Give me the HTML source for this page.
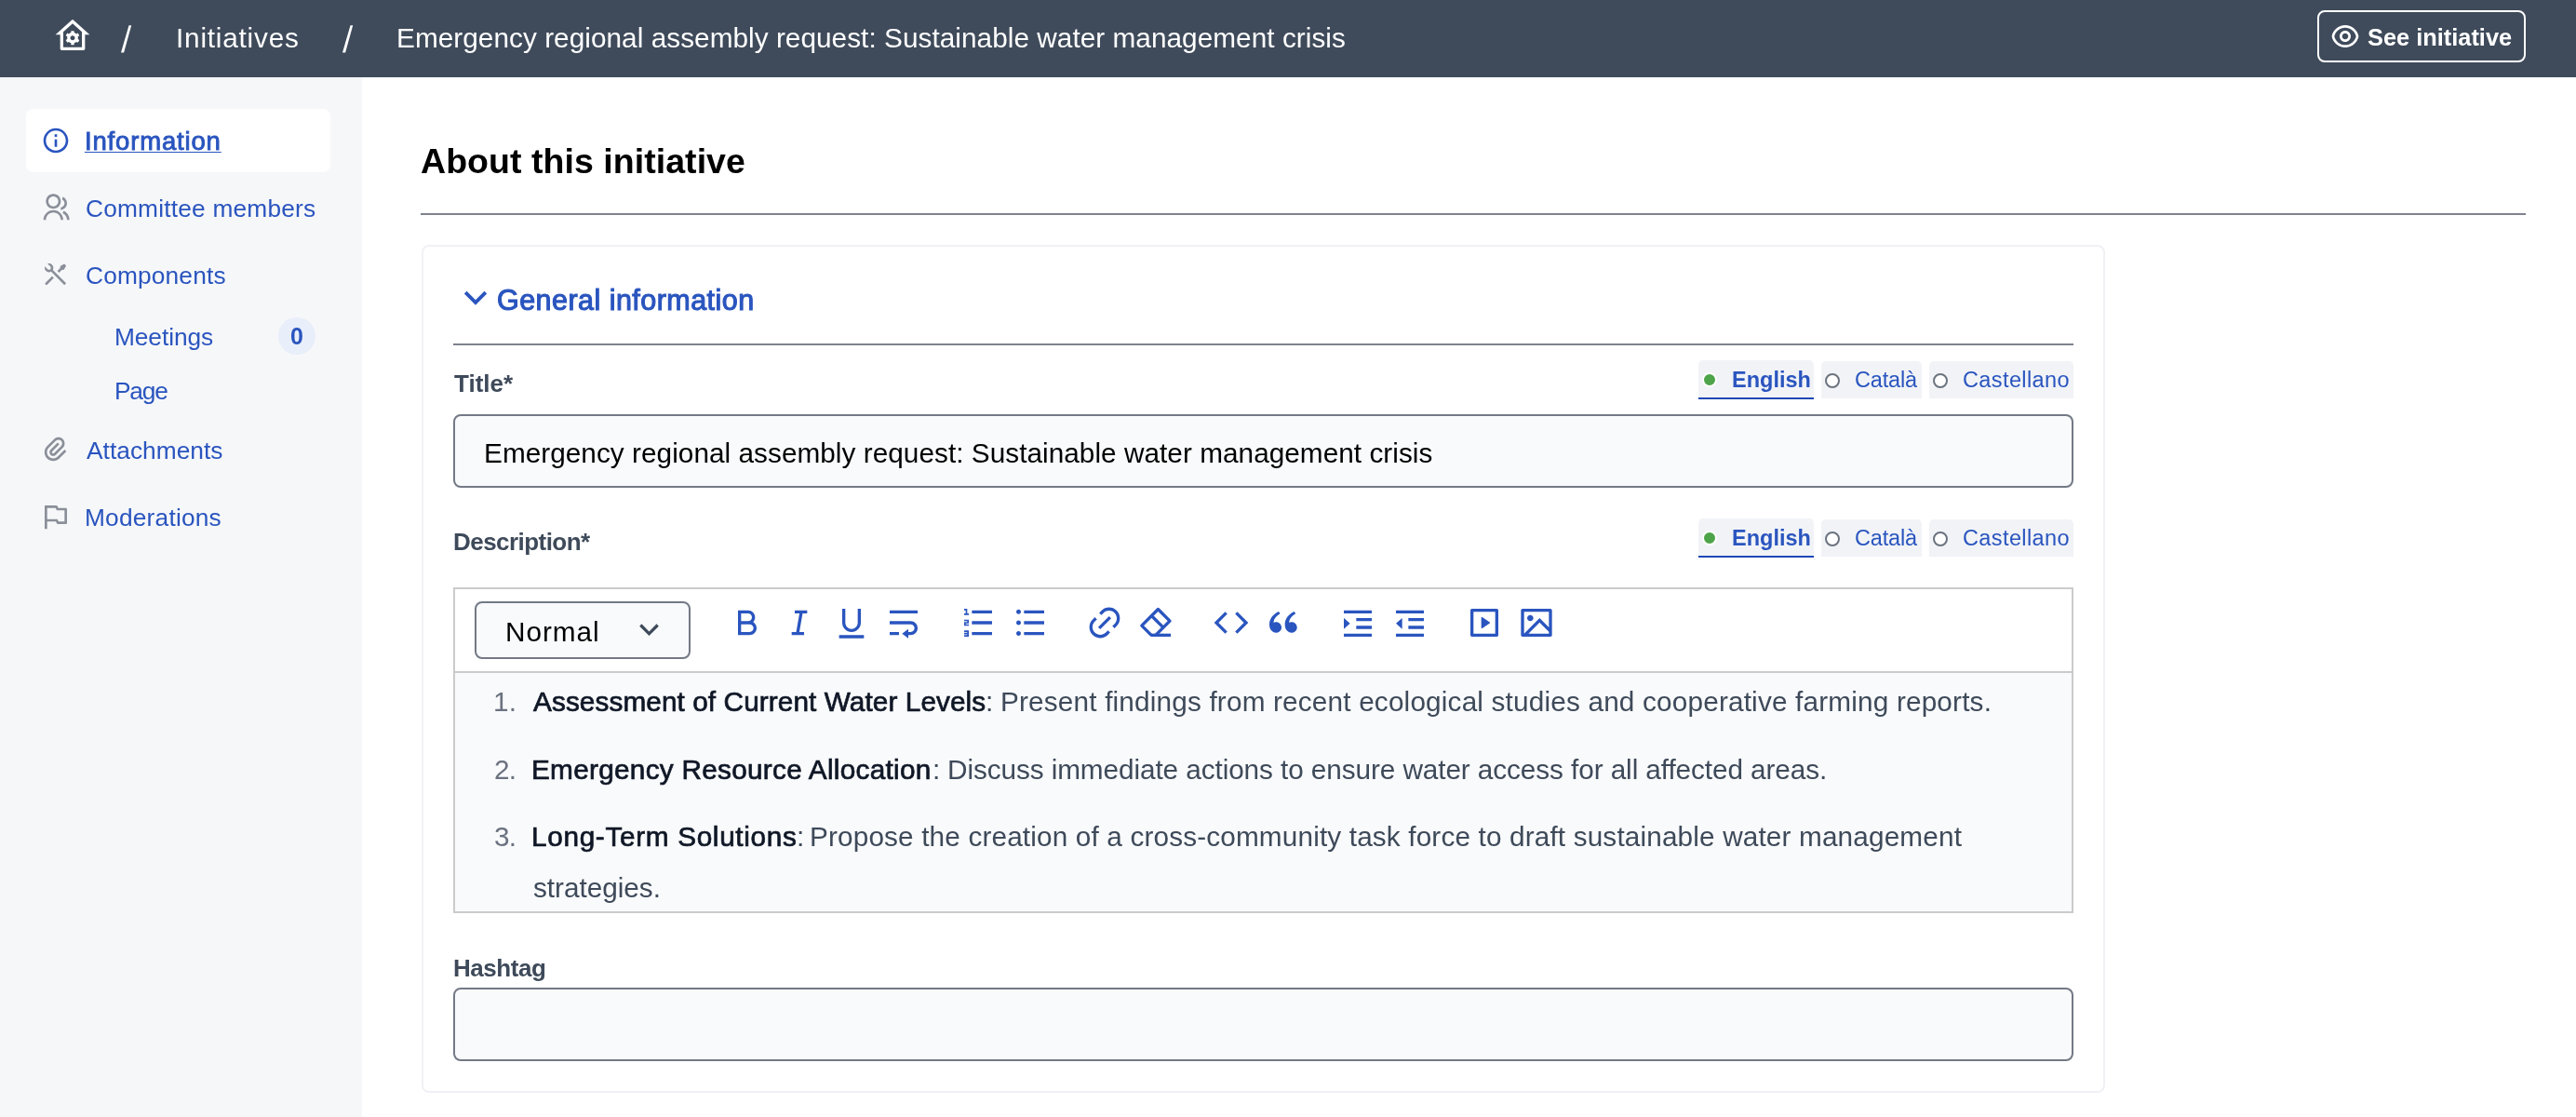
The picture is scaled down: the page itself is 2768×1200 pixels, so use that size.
<!DOCTYPE html>
<html><head><meta charset="utf-8"><style>
html,body{margin:0;padding:0;width:2768px;height:1200px;overflow:hidden;background:#fff;font-family:"Liberation Sans",sans-serif;}
.a{position:absolute;box-sizing:border-box;}
.t{position:absolute;white-space:nowrap;will-change:transform;}
svg{position:absolute;overflow:visible;}
</style></head><body>
<!-- header -->
<div class="a" style="left:0;top:0;width:2768px;height:83px;background:#3f4b5b"></div>
<svg style="left:58px;top:19px" width="40" height="40" viewBox="0 0 24 24"><path fill="#fff" d="M19 21H5C4.44772 21 4 20.5523 4 20V11L1 11L11.3273 1.6115C11.7087 1.26475 12.2913 1.26475 12.6727 1.6115L23 11L20 11V20C20 20.5523 19.5523 21 19 21ZM6 19H18V9.15745L12 3.7029L6 9.15745V19ZM8.59117 13.8089C8.52937 13.5477 8.49666 13.2753 8.49666 12.9954C8.49666 12.7155 8.52929 12.4432 8.59107 12.1821L7.60003 11.6093L8.59918 9.87906L9.59064 10.4526C9.98412 10.0792 10.4669 9.79756 11.0035 9.64331V8.49777H13.0016V9.64331C13.5383 9.79756 14.0211 10.0793 14.4146 10.4527L15.4062 9.87906L16.4054 11.6093L15.4142 12.1821C15.4759 12.4432 15.5086 12.7155 15.5086 12.9954C15.5086 13.2753 15.4759 13.5477 15.4141 13.8089L16.4054 14.3817L15.4062 16.1119L14.4144 15.5381C14.0209 15.9114 13.5382 16.193 13.0016 16.3473V17.4928H11.0035V16.3473C10.4669 16.1931 9.98418 15.9114 9.59072 15.5381L8.59918 16.1119L7.60003 14.3817L8.59117 13.8089ZM12.0026 14.4943C12.8303 14.4943 13.5013 13.8233 13.5013 12.9954C13.5013 12.1676 12.8303 11.4966 12.0026 11.4966C11.1748 11.4966 10.5038 12.1676 10.5038 12.9954C10.5038 13.8233 11.1748 14.4943 12.0026 14.4943Z"/></svg>
<svg style="left:128px;top:26px" width="16" height="32"><polygon points="10.5,1.3 13.2,1.3 5.1,30.4 2,30.4" fill="#fff"/></svg>
<svg style="left:366px;top:26px" width="16" height="32"><polygon points="10.5,1.3 13.2,1.3 5.1,30.4 2,30.4" fill="#fff"/></svg>
<div class="a" style="left:2490px;top:11px;width:224px;height:56px;border:2px solid #fff;border-radius:8px"></div>
<svg style="left:2504px;top:23px" width="32" height="32" viewBox="0 0 24 24"><path fill="#fff" d="M12.0003 3C17.3924 3 21.8784 6.87976 22.8189 12C21.8784 17.1202 17.3924 21 12.0003 21C6.60812 21 2.12215 17.1202 1.18164 12C2.12215 6.87976 6.60812 3 12.0003 3ZM12.0003 19C16.2359 19 19.8603 16.052 20.7777 12C19.8603 7.94803 16.2359 5 12.0003 5C7.7646 5 4.14022 7.94803 3.22278 12C4.14022 16.052 7.7646 19 12.0003 19ZM12.0003 16.5C9.51498 16.5 7.50026 14.4853 7.50026 12C7.50026 9.51472 9.51498 7.5 12.0003 7.5C14.4855 7.5 16.5003 9.51472 16.5003 12C16.5003 14.4853 14.4855 16.5 12.0003 16.5ZM12.0003 14.5C13.381 14.5 14.5003 13.3807 14.5003 12C14.5003 10.6193 13.381 9.5 12.0003 9.5C10.6196 9.5 9.50026 10.6193 9.50026 12C9.50026 13.3807 10.6196 14.5 12.0003 14.5Z"/></svg>

<!-- sidebar -->
<div class="a" style="left:0;top:83px;width:389px;height:1117px;background:#f6f7f9"></div>
<div class="a" style="left:28px;top:117px;width:327px;height:68px;background:#fff;border-radius:8px"></div>
<svg style="left:44px;top:135px" width="32" height="32" viewBox="0 0 24 24"><path fill="#2a55bf" d="M12 22C6.47715 22 2 17.5228 2 12C2 6.47715 6.47715 2 12 2C17.5228 2 22 6.47715 22 12C22 17.5228 17.5228 22 12 22ZM12 20C16.4183 20 20 16.4183 20 12C20 7.58172 16.4183 4 12 4C7.58172 4 4 7.58172 4 12C4 16.4183 7.58172 20 12 20ZM11 7H13V9H11V7ZM11 11H13V17H11V11Z"/></svg>
<svg style="left:44px;top:207px" width="32" height="32" viewBox="0 0 24 24"><path fill="#8a8f99" d="M2 22C2 17.5817 5.58172 14 10 14C14.4183 14 18 17.5817 18 22H16C16 18.6863 13.3137 16 10 16C6.68629 16 4 18.6863 4 22H2ZM10 13C6.685 13 4 10.315 4 7C4 3.685 6.685 1 10 1C13.315 1 16 3.685 16 7C16 10.315 13.315 13 10 13ZM10 11C12.21 11 14 9.21 14 7C14 4.79 12.21 3 10 3C7.79 3 6 4.79 6 7C6 9.21 7.79 11 10 11ZM18.2837 14.7028C21.0644 15.9561 23 18.752 23 22H21C21 19.564 19.5483 17.4671 17.4628 16.5271L18.2837 14.7028ZM17.5962 3.41321C19.5944 4.23703 21 6.20361 21 8.5C21 11.3702 18.8042 13.7252 16 13.9776V11.9646C17.6967 11.7222 19 10.264 19 8.5C19 7.11935 18.2016 5.92603 17.041 5.35635L17.5962 3.41321Z"/></svg>
<svg style="left:44px;top:279px" width="32" height="32" viewBox="0 0 24 24"><path fill="#8a8f99" d="M5.32943 3.27158C6.56252 2.8332 7.9923 3.10749 8.97927 4.09446C10.1002 5.21537 10.3019 6.90741 9.5843 8.23385L20.293 18.9437L18.8788 20.3579L8.16982 9.64875C6.84325 10.3669 5.15069 10.1654 4.02952 9.04421C3.04227 8.05696 2.7681 6.62665 3.20701 5.39332L5.44373 7.63C6.02952 8.21578 6.97927 8.21578 7.56505 7.63C8.15084 7.04421 8.15084 6.09446 7.56505 5.50868L5.32943 3.27158ZM15.6968 5.15512L18.8788 3.38736L20.293 4.80157L18.5252 7.98355L16.7574 8.3371L14.6361 10.4584L13.2219 9.04421L15.3432 6.92289L15.6968 5.15512ZM8.97927 13.2868L10.3935 14.7011L5.09018 20.0044C4.69966 20.3949 4.06649 20.3949 3.67597 20.0044C3.31334 19.6417 3.28744 19.0699 3.59826 18.6774L3.67597 18.5902L8.97927 13.2868Z"/></svg>
<div class="a" style="left:299px;top:341px;width:40px;height:40px;border-radius:20px;background:#e8eefa"></div>
<span class="t" style="left:312px;top:345px;font-size:25px;line-height:32px;font-weight:700;color:#2a55bf">0</span>
<svg style="left:44px;top:467px" width="32" height="32" viewBox="0 0 24 24"><path fill="#8a8f99" d="M14.8287 7.7574L9.1718 13.4143C8.78127 13.8048 8.78127 14.4379 9.1718 14.8285C9.56232 15.219 10.1955 15.219 10.586 14.8285L16.2429 9.17161C17.4144 8.00004 17.4144 6.10055 16.2429 4.92897C15.0713 3.7574 13.1718 3.7574 12.0002 4.92897L6.34337 10.5858C4.39075 12.5384 4.39075 15.7043 6.34337 17.6569C8.29599 19.6095 11.4618 19.6095 13.4144 17.6569L19.0713 12L20.4855 13.4143L14.8287 19.0711C12.095 21.8048 7.66283 21.8048 4.92916 19.0711C2.19549 16.3374 2.19549 11.9053 4.92916 9.17161L10.586 3.51476C12.5386 1.56214 15.7045 1.56214 17.6571 3.51476C19.6097 5.46738 19.6097 8.63321 17.6571 10.5858L12.0002 16.2427C10.8287 17.4143 8.92916 17.4143 7.75759 16.2427C6.58601 15.0711 6.58601 13.1716 7.75759 12L13.4144 6.34319L14.8287 7.7574Z"/></svg>
<svg style="left:44px;top:539px" width="32" height="32" viewBox="0 0 24 24"><path fill="#8a8f99" d="M5 16V22H3V3H12.382C12.7607 3 13.107 3.214 13.2764 3.55279L14 5H20C20.5523 5 21 5.44772 21 6V17C21 17.5523 20.5523 18 20 18H13.618C13.2393 18 12.893 17.786 12.7236 17.4472L12 16H5ZM5 5V14H13.236L14.236 16H19V7H12.764L11.764 5H5Z"/></svg>

<!-- main -->
<div class="a" style="left:452px;top:229px;width:2262px;height:2px;background:#7d828d"></div>
<div class="a" style="left:453px;top:263px;width:1809px;height:911px;border:2px solid #f0f1f5;border-radius:8px"></div>
<svg style="left:487.5px;top:297px" width="46" height="46" viewBox="0 0 24 24"><path fill="#2a55bf" d="M11.9999 13.1714L16.9497 8.22168L18.3639 9.63589L11.9999 15.9999L5.63599 9.63589L7.0502 8.22168L11.9999 13.1714Z"/></svg>
<div class="a" style="left:487px;top:369px;width:1741px;height:2px;background:#7d828d"></div>

<!-- tabs 1 -->
<div class="a" style="left:1825px;top:387px;width:124px;height:42px;background:#f1f3f7;border-radius:5px 5px 0 0;border-bottom:2px solid #1f48b5"></div>
<div class="a" style="left:1957px;top:388px;width:108px;height:40px;background:#f1f3f7;border-radius:5px 5px 0 0"></div>
<div class="a" style="left:2073px;top:388px;width:155px;height:40px;background:#f1f3f7;border-radius:5px 5px 0 0"></div>
<div class="a" style="left:1829px;top:400px;width:16px;height:16px;border-radius:8px;background:#4ea449;border:2px solid #fff"></div>
<div class="a" style="left:1961px;top:401px;width:16px;height:16px;border-radius:8px;background:#fff;border:2px solid #6b737e"></div>
<div class="a" style="left:2077px;top:401px;width:16px;height:16px;border-radius:8px;background:#fff;border:2px solid #6b737e"></div>
<!-- tabs 2 -->
<div class="a" style="left:1825px;top:557px;width:124px;height:42px;background:#f1f3f7;border-radius:5px 5px 0 0;border-bottom:2px solid #1f48b5"></div>
<div class="a" style="left:1957px;top:558px;width:108px;height:40px;background:#f1f3f7;border-radius:5px 5px 0 0"></div>
<div class="a" style="left:2073px;top:558px;width:155px;height:40px;background:#f1f3f7;border-radius:5px 5px 0 0"></div>
<div class="a" style="left:1829px;top:570px;width:16px;height:16px;border-radius:8px;background:#4ea449;border:2px solid #fff"></div>
<div class="a" style="left:1961px;top:571px;width:16px;height:16px;border-radius:8px;background:#fff;border:2px solid #6b737e"></div>
<div class="a" style="left:2077px;top:571px;width:16px;height:16px;border-radius:8px;background:#fff;border:2px solid #6b737e"></div>

<!-- title input -->
<div class="a" style="left:487px;top:445px;width:1741px;height:79px;background:#f9fafb;border:2px solid #737985;border-radius:8px"></div>

<!-- editor -->
<div class="a" style="left:487px;top:631px;width:1741px;height:350px;border:2px solid #cbcbcb;background:#fff"></div>
<div class="a" style="left:489px;top:721px;width:1737px;height:258px;background:#f9fafb;border-top:2px solid #cbcbcb"></div>
<div class="a" style="left:510px;top:646px;width:232px;height:62px;background:#f9fafb;border:2px solid #737985;border-radius:8px"></div>
<svg style="left:677.5px;top:657.3px" width="39" height="39" viewBox="0 0 24 24"><path fill="#3e4a5a" d="M11.9999 13.1714L16.9497 8.22168L18.3639 9.63589L11.9999 15.9999L5.63599 9.63589L7.0502 8.22168L11.9999 13.1714Z"/></svg>

<!-- hashtag input -->
<div class="a" style="left:487px;top:1061px;width:1741px;height:79px;background:#f9fafb;border:2px solid #737985;border-radius:8px"></div>

<!-- toolbar icons -->
<svg style="left:782.5px;top:649px" width="40" height="40" viewBox="0 0 24 24"><path fill="#2a55bf" d="M8 11H12.5C13.8807 11 15 9.88071 15 8.5C15 7.11929 13.8807 6 12.5 6H8V11ZM18 15.5C18 17.9853 15.9853 20 13.5 20H6V4H12.5C14.9853 4 17 6.01472 17 8.5C17 9.70431 16.5269 10.7981 15.7564 11.6058C17.0979 12.3847 18 13.837 18 15.5ZM8 13V18H13.5C14.8807 18 16 16.8807 16 15.5C16 14.1193 14.8807 13 13.5 13H8Z"/></svg>
<svg style="left:838.7px;top:649px" width="40" height="40" viewBox="0 0 24 24"><path fill="#2a55bf" d="M15 20H7V18H9.92661L12.0425 6H9V4H17V6H14.0734L11.9575 18H15V20Z"/></svg>
<svg style="left:895.3px;top:649px" width="40" height="40" viewBox="0 0 24 24"><path fill="#2a55bf" d="M8 3V12C8 14.2091 9.79086 16 12 16C14.2091 16 16 14.2091 16 12V3H18V12C18 15.3137 15.3137 18 12 18C8.68629 18 6 15.3137 6 12V3H8ZM4 20H20V22H4V20Z"/></svg>
<svg style="left:950.8px;top:649px" width="40" height="40" viewBox="0 0 24 24"><path fill="#2a55bf" d="M15 18H16.5C17.8807 18 19 16.8807 19 15.5C19 14.1193 17.8807 13 16.5 13H3V11H16.5C18.9853 11 21 13.0147 21 15.5C21 17.9853 18.9853 20 16.5 20H15V22L11 19L15 16V18ZM3 4H21V6H3V4ZM9 18V20H3V18H9Z"/></svg>
<svg style="left:1031.4px;top:649px" width="40" height="40" viewBox="0 0 24 24"><path fill="#2a55bf" d="M8 4H21V6H8V4ZM5 3V6H6V7H3V6H4V4H3V3H5ZM3 14V11.5H5V11H3V10H6V12.5H4V13H6V14H3ZM5 19.5H3V18.5H5V18H3V17H6V21H3V20H5V19.5ZM8 11H21V13H8V11ZM8 18H21V20H8V18Z"/></svg>
<svg style="left:1087px;top:649px" width="40" height="40" viewBox="0 0 24 24"><path fill="#2a55bf" d="M8 4H21V6H8V4ZM4.5 6.5C3.67157 6.5 3 5.82843 3 5C3 4.17157 3.67157 3.5 4.5 3.5C5.32843 3.5 6 4.17157 6 5C6 5.82843 5.32843 6.5 4.5 6.5ZM4.5 13.5C3.67157 13.5 3 12.8284 3 12C3 11.1716 3.67157 10.5 4.5 10.5C5.32843 10.5 6 11.1716 6 12C6 12.8284 5.32843 13.5 4.5 13.5ZM4.5 20.4C3.67157 20.4 3 19.7284 3 18.9C3 18.0716 3.67157 17.4 4.5 17.4C5.32843 17.4 6 18.0716 6 18.9C6 19.7284 5.32843 20.4 4.5 20.4ZM8 11H21V13H8V11ZM8 18H21V20H8V18Z"/></svg>
<svg style="left:1167.2px;top:649px" width="40" height="40" viewBox="0 0 24 24"><path fill="#2a55bf" d="M18.3638 15.5355L16.9496 14.1213L18.3638 12.7071C20.3164 10.7545 20.3164 7.58866 18.3638 5.63604C16.4112 3.68341 13.2453 3.68341 11.2927 5.63604L9.87849 7.05025L8.46428 5.63604L9.87849 4.22182C12.6122 1.48815 17.0443 1.48815 19.778 4.22182C22.5117 6.95549 22.5117 11.3876 19.778 14.1213L18.3638 15.5355ZM15.5353 18.364L14.1211 19.7782C11.3875 22.5118 6.95531 22.5118 4.22164 19.7782C1.48797 17.0445 1.48797 12.6123 4.22164 9.87868L5.63585 8.46446L7.05007 9.87868L5.63585 11.2929C3.68323 13.2455 3.68323 16.4113 5.63585 18.364C7.58847 20.3166 10.7543 20.3166 12.7069 18.364L14.1211 16.9497L15.5353 18.364ZM14.8282 7.75736L16.2425 9.17157L9.17139 16.2426L7.75717 14.8284L14.8282 7.75736Z"/></svg>
<svg style="left:1303.3px;top:649px" width="40" height="40" viewBox="0 0 24 24"><path fill="#2a55bf" d="M23 12L15.9289 19.0711L14.5147 17.6569L20.1716 12L14.5147 6.34317L15.9289 4.92896L23 12ZM3.82843 12L9.48528 17.6569L8.07107 19.0711L1 12L8.07107 4.92896L9.48528 6.34317L3.82843 12Z"/></svg>
<svg style="left:1359px;top:649px" width="40" height="40" viewBox="0 0 24 24"><path fill="#2a55bf" d="M4.58341 17.3211C3.55316 16.2274 3 15 3 13.0103C3 9.51086 5.45651 6.37366 9.03059 4.82318L9.92328 6.20079C6.58804 8.00539 5.93618 10.346 5.67564 11.8209C6.21263 11.5426 6.91558 11.4466 7.60471 11.5105C9.40908 11.6779 10.8312 13.1591 10.8312 15C10.8312 16.933 9.26416 18.5 7.33116 18.5C6.2581 18.5 5.23196 18.0095 4.58341 17.3211ZM14.5834 17.3211C13.5532 16.2274 13 15 13 13.0103C13 9.51086 15.4565 6.37366 19.0306 4.82318L19.9233 6.20079C16.588 8.00539 15.9362 10.346 15.6756 11.8209C16.2126 11.5426 16.9156 11.4466 17.6047 11.5105C19.4091 11.6779 20.8312 13.1591 20.8312 15C20.8312 16.933 19.2642 18.5 17.3312 18.5C16.2581 18.5 15.232 18.0095 14.5834 17.3211Z"/></svg>
<svg style="left:1439px;top:649px" width="40" height="40" viewBox="0 0 24 24"><path fill="#2a55bf" d="M3 4H21V6H3V4ZM3 19H21V21H3V19ZM11 14H21V16H11V14ZM11 9H21V11H11V9ZM3 9L7 12.5L3 16V9Z"/></svg>
<svg style="left:1495px;top:649px" width="40" height="40" viewBox="0 0 24 24"><path fill="#2a55bf" d="M3 4H21V6H3V4ZM3 19H21V21H3V19ZM11 14H21V16H11V14ZM11 9H21V11H11V9ZM7 9V16L3 12.5L7 9Z"/></svg>
<svg style="left:1575.3px;top:649px" width="40" height="40" viewBox="0 0 24 24"><path fill="#2a55bf" d="M3 3.9934C3 3.44476 3.44495 3 3.9934 3H20.0066C20.5552 3 21 3.44495 21 3.9934V20.0066C21 20.5552 20.5551 21 20.0066 21H3.9934C3.44476 21 3 20.5551 3 20.0066V3.9934ZM5 5V19H19V5H5ZM10.6219 8.41459L15.5008 11.6672C15.6846 11.7897 15.7343 12.0381 15.6117 12.2219C15.5824 12.2658 15.5447 12.3035 15.5008 12.3328L10.6219 15.5854C10.4381 15.708 10.1897 15.6583 10.0672 15.4745C10.0234 15.4088 10 15.3316 10 15.2526V8.74741C10 8.52649 10.1791 8.34741 10.4 8.34741C10.479 8.34741 10.5562 8.37078 10.6219 8.41459Z"/></svg>
<svg style="left:1631px;top:649px" width="40" height="40" viewBox="0 0 24 24"><path fill="#2a55bf" d="M2.9918 21C2.44405 21 2 20.5551 2 20.0066V3.9934C2 3.44476 2.45531 3 2.9918 3H21.0082C21.556 3 22 3.44495 22 3.9934V20.0066C22 20.5552 21.5447 21 21.0082 21H2.9918ZM20 15V5H4V19L14 9L20 15ZM20 17.8284L14 11.8284L6.82843 19H20V17.8284ZM8 11C6.89543 11 6 10.1046 6 9C6 7.89543 6.89543 7 8 7C9.10457 7 10 7.89543 10 9C10 10.1046 9.10457 11 8 11Z"/></svg>
<svg style="left:1223px;top:649px" width="40" height="40" viewBox="0 0 24 24"><g fill="none" stroke="#2a55bf" stroke-width="2" stroke-linejoin="round"><path d="M8.46 20L2.3 13.84L12.84 3.3L20.4 10.86L11.26 20M8.62 7.52L16.18 15.08"/><path d="M8 20H21" stroke-linejoin="miter"/></g></svg>

<span id="bc1" class="t" style="left:189.00px;top:26.12px;font-size:29.75px;line-height:29.75px;font-weight:400;color:#fff;letter-spacing:0.786px;">Initiatives</span>
<span id="bc2" class="t" style="left:426.00px;top:26.12px;font-size:29.75px;line-height:29.75px;font-weight:400;color:#fff;letter-spacing:0.041px;">Emergency regional assembly request: Sustainable water management crisis</span>
<span id="see" class="t" style="left:2544.00px;top:28.00px;font-size:25.4px;line-height:25.4px;font-weight:700;color:#fff;letter-spacing:-0.009px;">See initiative</span>
<span id="sb1" class="t" style="left:90.50px;top:137.92px;font-size:27.5px;line-height:27.5px;font-weight:400;color:#2a55bf;letter-spacing:0.833px;-webkit-text-stroke:0.9px #2a55bf;text-decoration:underline;text-underline-offset:2px;text-decoration-thickness:1.3px;">Information</span>
<span id="sb2" class="t" style="left:91.80px;top:210.94px;font-size:26.3px;line-height:26.3px;font-weight:400;color:#2a55bf;letter-spacing:0.195px;">Committee members</span>
<span id="sb3" class="t" style="left:91.80px;top:282.94px;font-size:26.3px;line-height:26.3px;font-weight:400;color:#2a55bf;letter-spacing:0.161px;">Components</span>
<span id="sb4" class="t" style="left:122.80px;top:349.14px;font-size:26.3px;line-height:26.3px;font-weight:400;color:#2a55bf;letter-spacing:-0.079px;">Meetings</span>
<span id="sb5" class="t" style="left:122.80px;top:407.34px;font-size:26.3px;line-height:26.3px;font-weight:400;color:#2a55bf;letter-spacing:-1.197px;">Page</span>
<span id="sb6" class="t" style="left:92.80px;top:470.94px;font-size:26.3px;line-height:26.3px;font-weight:400;color:#2a55bf;letter-spacing:0.029px;">Attachments</span>
<span id="sb7" class="t" style="left:91.00px;top:542.94px;font-size:26.3px;line-height:26.3px;font-weight:400;color:#2a55bf;letter-spacing:0.204px;">Moderations</span>
<span id="h1" class="t" style="left:452.20px;top:155.26px;font-size:37.5px;line-height:37.5px;font-weight:700;color:#000;letter-spacing:0.047px;">About this initiative</span>
<span id="h2" class="t" style="left:534.00px;top:307.38px;font-size:30.5px;line-height:30.5px;font-weight:400;color:#2a55bf;letter-spacing:0.461px;-webkit-text-stroke:1.1px #2a55bf;">General information</span>
<span id="lb1" class="t" style="left:487.70px;top:399.19px;font-size:26px;line-height:26px;font-weight:700;color:#3e4a5a;letter-spacing:0.004px;">Title*</span>
<span id="lb2" class="t" style="left:487.00px;top:568.79px;font-size:26px;line-height:26px;font-weight:700;color:#3e4a5a;letter-spacing:-0.548px;">Description*</span>
<span id="lb3" class="t" style="left:487.00px;top:1027.39px;font-size:26px;line-height:26px;font-weight:700;color:#3e4a5a;letter-spacing:-0.449px;">Hashtag</span>
<span id="inp1" class="t" style="left:520.00px;top:471.82px;font-size:29.75px;line-height:29.75px;font-weight:400;color:#000;letter-spacing:0.034px;">Emergency regional assembly request: Sustainable water management crisis</span>
<span id="normal" class="t" style="left:542.60px;top:664.02px;font-size:29.75px;line-height:29.75px;font-weight:400;color:#000;letter-spacing:0.947px;">Normal</span>
<span id="ena" class="t" style="left:1860.80px;top:396.71px;font-size:23.5px;line-height:23.5px;font-weight:700;color:#2a55bf;letter-spacing:-0.002px;">English</span>
<span id="caa" class="t" style="left:1992.50px;top:396.71px;font-size:23.5px;line-height:23.5px;font-weight:400;color:#2a55bf;letter-spacing:-0.172px;">Català</span>
<span id="csa" class="t" style="left:2109.00px;top:396.71px;font-size:23.5px;line-height:23.5px;font-weight:400;color:#2a55bf;letter-spacing:0.392px;">Castellano</span>
<span id="enb" class="t" style="left:1860.80px;top:567.01px;font-size:23.5px;line-height:23.5px;font-weight:700;color:#2a55bf;letter-spacing:-0.002px;">English</span>
<span id="cab" class="t" style="left:1992.50px;top:567.01px;font-size:23.5px;line-height:23.5px;font-weight:400;color:#2a55bf;letter-spacing:-0.172px;">Català</span>
<span id="csb" class="t" style="left:2109.00px;top:567.01px;font-size:23.5px;line-height:23.5px;font-weight:400;color:#2a55bf;letter-spacing:0.392px;">Castellano</span>
<span id="n1" class="t" style="left:530.00px;top:739.42px;font-size:29.75px;line-height:29.75px;font-weight:400;color:#6b7280;letter-spacing:0.154px;">1.</span>
<span id="n2" class="t" style="left:531.00px;top:812.12px;font-size:29.75px;line-height:29.75px;font-weight:400;color:#6b7280;letter-spacing:-0.846px;">2.</span>
<span id="n3" class="t" style="left:531.00px;top:884.12px;font-size:29.75px;line-height:29.75px;font-weight:400;color:#6b7280;letter-spacing:-0.846px;">3.</span>
<span id="l1b" class="t" style="left:573.30px;top:739.42px;font-size:29.75px;line-height:29.75px;font-weight:400;color:#0f1726;letter-spacing:0.086px;-webkit-text-stroke:0.7px #0f1726;">Assessment of Current Water Levels</span>
<span id="l1c" class="t" style="left:1059.00px;top:739.42px;font-size:29.75px;line-height:29.75px;font-weight:400;color:#3e4a5a;letter-spacing:1.000px;">:</span>
<span id="l1r" class="t" style="left:1075.20px;top:739.42px;font-size:29.75px;line-height:29.75px;font-weight:400;color:#3e4a5a;letter-spacing:0.167px;">Present findings from recent ecological studies and cooperative farming reports.</span>
<span id="l2b" class="t" style="left:571.30px;top:812.12px;font-size:29.75px;line-height:29.75px;font-weight:400;color:#0f1726;letter-spacing:0.273px;-webkit-text-stroke:0.7px #0f1726;">Emergency Resource Allocation</span>
<span id="l2c" class="t" style="left:1001.50px;top:812.12px;font-size:29.75px;line-height:29.75px;font-weight:400;color:#3e4a5a;letter-spacing:1.000px;">:</span>
<span id="l2r" class="t" style="left:1017.50px;top:812.12px;font-size:29.75px;line-height:29.75px;font-weight:400;color:#3e4a5a;letter-spacing:-0.093px;">Discuss immediate actions to ensure water access for all affected areas.</span>
<span id="l3b" class="t" style="left:571.30px;top:884.12px;font-size:29.75px;line-height:29.75px;font-weight:400;color:#0f1726;letter-spacing:0.668px;-webkit-text-stroke:0.7px #0f1726;">Long-Term Solutions</span>
<span id="l3c" class="t" style="left:856.00px;top:884.12px;font-size:29.75px;line-height:29.75px;font-weight:400;color:#3e4a5a;letter-spacing:1.000px;">:</span>
<span id="l3r" class="t" style="left:870.30px;top:884.12px;font-size:29.75px;line-height:29.75px;font-weight:400;color:#3e4a5a;letter-spacing:0.142px;">Propose the creation of a cross-community task force to draft sustainable water management</span>
<span id="l4" class="t" style="left:573.30px;top:939.22px;font-size:29.75px;line-height:29.75px;font-weight:400;color:#3e4a5a;letter-spacing:-0.028px;">strategies.</span>
</body></html>
